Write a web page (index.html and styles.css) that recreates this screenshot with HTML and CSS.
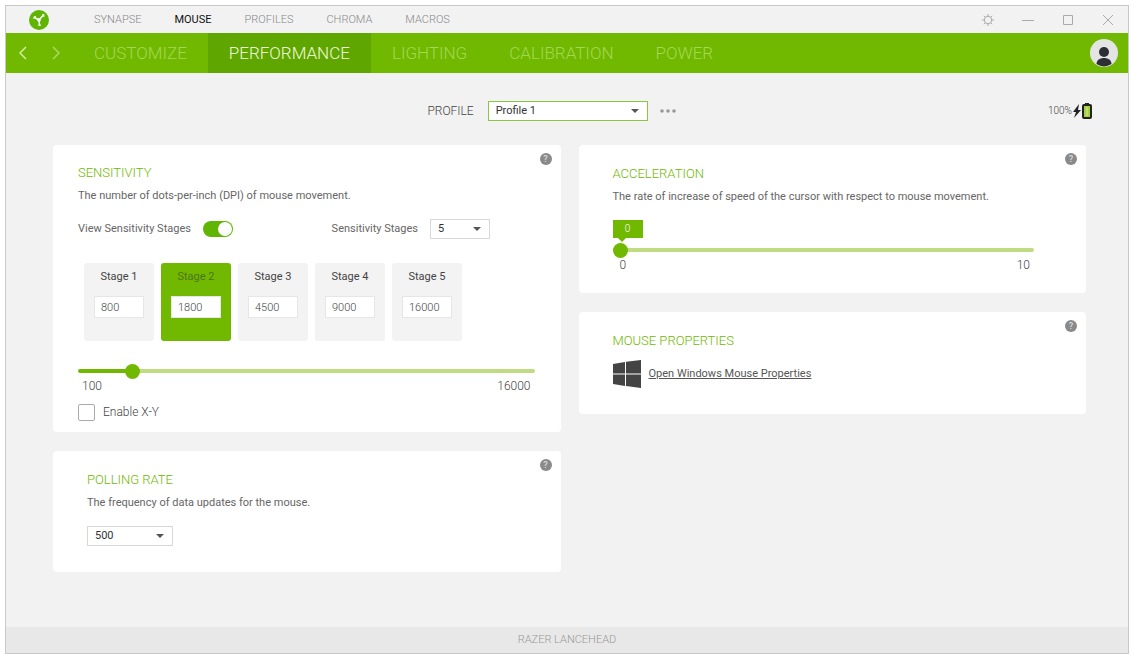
FILE: index.html
```html
<!DOCTYPE html>
<html lang="en">
<head>
    <meta charset="UTF-8">
    <meta name="viewport" content="width=device-width, initial-scale=1.0">
    <title>Razer Synapse</title>
    <link rel="stylesheet" href="styles.css">
</head>
<body>
    <div class="window">
        <header class="title-bar">
            <svg class="logo" viewBox="0 0 20 20" aria-hidden="true">
                <circle cx="10" cy="10" r="10" fill="#5fb404"/>
                <path d="M5.500 7.500L10 10l4-4.500M10 10l.5 5" fill="none" stroke="#fff" stroke-width="1.500" stroke-linecap="round" stroke-linejoin="round"/>
                <circle cx="10" cy="10" r="1.800" fill="#fff"/>
                <path d="M13 4.800l2-.3-.2 2.500M4.800 8.800l.2-2 2-.2M9 15.200h3" fill="none" stroke="#fff"/>
            </svg>
            <nav class="main-menu">
                <a href="#">SYNAPSE</a>
                <a href="#" class="active">MOUSE</a>
                <a href="#">PROFILES</a>
                <a href="#">CHROMA</a>
                <a href="#">MACROS</a>
            </nav>
            <div class="window-buttons">
                <button type="button" aria-label="Settings">
                    <svg viewBox="0 0 12 12"><circle cx="6" cy="6" r="3.700"/><path d="M6 0v2M6 10v2M0 6h2M10 6h2M1.800 1.800l1.500 1.500M8.700 8.700l1.500 1.500M1.800 10.200l1.500-1.500M8.700 3.300l1.500-1.500"/></svg>
                </button>
                <button type="button" aria-label="Minimize">
                    <svg viewBox="0 0 12 12"><path d="M0 6.500h12"/></svg>
                </button>
                <button type="button" aria-label="Maximize">
                    <svg viewBox="0 0 12 12"><path d="M1.500 1.500h9v9h-9z"/></svg>
                </button>
                <button type="button" aria-label="Close">
                    <svg viewBox="0 0 12 12"><path d="M1 1l10 10M11 1L1 11"/></svg>
                </button>
            </div>
        </header>

        <div class="tab-bar">
            <div class="history">
                <button type="button" aria-label="Back">
                    <svg viewBox="0 0 10 16"><path d="M8 2L2 8l6 6"/></svg>
                </button>
                <button type="button" class="disabled" aria-label="Forward">
                    <svg viewBox="0 0 10 16"><path d="M2 2l6 6-6 6"/></svg>
                </button>
            </div>
            <nav class="tabs">
                <a href="#">CUSTOMIZE</a>
                <a href="#" class="active">PERFORMANCE</a>
                <a href="#">LIGHTING</a>
                <a href="#">CALIBRATION</a>
                <a href="#">POWER</a>
            </nav>
            <button type="button" class="avatar" aria-label="Account">
                <svg viewBox="0 0 28 28">
                    <circle cx="14" cy="14" r="14" fill="#e4e4e4"/>
                    <circle cx="14" cy="13" r="5" fill="#2d2d35"/>
                    <path d="M6.500 25c0-4 3.500-6 7.500-6s7.500 2 7.500 6a14 14 0 0 1-15 0z" fill="#2d2d35"/>
                </svg>
            </button>
        </div>

        <main>
            <div class="profile-row">
                <div class="profile">
                    <label for="profile">PROFILE</label>
                    <span class="select profile-select">
                        <select id="profile"><option>Profile 1</option></select>
                    </span>
                    <button type="button" class="more" aria-label="More">
                        <svg viewBox="0 0 16 4"><circle cx="2" cy="2" r="1.800"/><circle cx="8" cy="2" r="1.800"/><circle cx="14" cy="2" r="1.800"/></svg>
                    </button>
                </div>
                <div class="battery">
                    <span>100%</span>
                    <svg class="bolt" viewBox="0 0 8 14"><path d="M6 0L0 8h3L1 14l7-8H5z" fill="#222"/></svg>
                    <svg class="cell" viewBox="0 0 10 16">
                        <path d="M3 0h4v2H3z" fill="#222"/>
                        <rect x="1" y="2" width="8" height="13" rx="1" fill="#a4cf3e" stroke="#222" stroke-width="2"/>
                        <path d="M5 4v9" stroke="#d5ec9b" stroke-width="1"/>
                    </svg>
                </div>
            </div>

            <div class="columns">
                <div class="column">
                    <section class="card sensitivity">
                        <button type="button" class="help" aria-label="Help">?</button>
                        <h2>SENSITIVITY</h2>
                        <p>The number of dots-per-inch (DPI) of mouse movement.</p>
                        <div class="options">
                            <div class="option">
                                <label for="view-stages">View Sensitivity Stages</label>
                                <input type="checkbox" id="view-stages" class="toggle" checked>
                            </div>
                            <div class="option">
                                <label for="stage-count">Sensitivity Stages</label>
                                <span class="select count-select">
                                    <select id="stage-count"><option>5</option></select>
                                </span>
                            </div>
                        </div>
                        <div class="stages">
                            <div class="stage">
                                <label for="stage1">Stage 1</label>
                                <input type="text" id="stage1" value="800">
                            </div>
                            <div class="stage active">
                                <label for="stage2">Stage 2</label>
                                <input type="text" id="stage2" value="1800">
                            </div>
                            <div class="stage">
                                <label for="stage3">Stage 3</label>
                                <input type="text" id="stage3" value="4500">
                            </div>
                            <div class="stage">
                                <label for="stage4">Stage 4</label>
                                <input type="text" id="stage4" value="9000">
                            </div>
                            <div class="stage">
                                <label for="stage5">Stage 5</label>
                                <input type="text" id="stage5" value="16000">
                            </div>
                        </div>
                        <input type="range" class="slider" min="100" max="16000" value="1800" aria-label="Sensitivity" style="--fill: 12%">
                        <div class="limits"><span>100</span><span>16000</span></div>
                        <div class="check">
                            <input type="checkbox" id="enable-xy">
                            <label for="enable-xy">Enable X-Y</label>
                        </div>
                    </section>

                    <section class="card polling">
                        <button type="button" class="help" aria-label="Help">?</button>
                        <h2>POLLING RATE</h2>
                        <p>The frequency of data updates for the mouse.</p>
                        <span class="select rate-select">
                            <select aria-label="Polling rate"><option>500</option></select>
                        </span>
                    </section>
                </div>

                <div class="column">
                    <section class="card acceleration">
                        <button type="button" class="help" aria-label="Help">?</button>
                        <h2>ACCELERATION</h2>
                        <p>The rate of increase of speed of the cursor with respect to mouse movement.</p>
                        <output class="bubble" for="acceleration">0</output>
                        <input type="range" id="acceleration" class="slider" min="0" max="10" value="0" aria-label="Acceleration" style="--fill: 0%">
                        <div class="limits"><span>0</span><span>10</span></div>
                    </section>

                    <section class="card properties">
                        <button type="button" class="help" aria-label="Help">?</button>
                        <h2>MOUSE PROPERTIES</h2>
                        <div class="windows-link">
                            <svg viewBox="0 0 28 28" aria-hidden="true">
                                <path d="M0 4l12-2v11.500H0zM13 1.800L28 0v13.500H13zM0 14.500h12V26L0 24zM13 14.500h15V28l-15-2z" fill="#444"/>
                            </svg>
                            <a href="#">Open Windows Mouse Properties</a>
                        </div>
                    </section>
                </div>
            </div>
        </main>

        <footer>RAZER LANCEHEAD</footer>
    </div>
</body>
</html>
```

FILE: styles.css
```css
* {
    box-sizing: border-box;
}
body {
    margin: 0;
    padding: 5px;
    background-color: #fff;
    font-family: Roboto, Arial, sans-serif;
    font-size: 12px;
    font-weight: 300;
    line-height: 18px;
    color: #444;
}
button, input, select {
    font: inherit;
    color: inherit;
    margin: 0;
}
button {
    display: flex;
    padding: 0;
    border: none;
    background: none;
    cursor: pointer;
}
.window {
    display: flex;
    flex-direction: column;
    min-height: calc(100vh - 10px);
    border: 1px solid #c8c8c8;
    background-color: #f2f2f2;
}

/* Title bar */
.title-bar {
    display: flex;
    align-items: center;
    height: 27px;
    padding: 0 14px 0 23px;
}
.logo {
    width: 20px;
    height: 20px;
}
.main-menu {
    display: flex;
    gap: 33px;
    margin-left: 45px;
    font-size: 11px;
}
.main-menu a {
    color: #888;
    text-decoration: none;
}
.main-menu .active {
    color: #111;
    font-weight: 400;
}
.window-buttons {
    display: flex;
    gap: 28px;
    margin-left: auto;
}
.window-buttons svg {
    width: 12px;
    height: 12px;
    fill: none;
    stroke: #aaa;
}

/* Green tab bar */
.tab-bar {
    display: flex;
    align-items: center;
    height: 40px;
    padding: 0 10px 0 12px;
    background-color: #70b900;
}
.history {
    display: flex;
    gap: 23px;
    width: 55px;
}
.history svg {
    width: 10px;
    height: 16px;
    fill: none;
    stroke: #d3ee9f;
    stroke-width: 1.5;
}
.history .disabled {
    opacity: 0.6;
}
.tabs {
    display: flex;
    align-self: stretch;
    font-size: 17px;
    line-height: 40px;
}
.tabs a {
    padding: 0 21px;
    color: #a5d854;
    text-decoration: none;
}
.tabs .active {
    background-color: #60a600;
    color: #f0fadd;
}
.avatar {
    margin-left: auto;
}
.avatar svg {
    width: 28px;
    height: 28px;
}

main {
    flex: 1;
    padding-top: 28px;
}

/* Drop-downs */
.select {
    display: inline-block;
    position: relative;
    height: 20px;
}
.select::after {
    content: "";
    position: absolute;
    right: 9px;
    top: 8px;
    border: 4px solid transparent;
    border-top-color: #555;
    border-bottom: none;
    pointer-events: none;
}
.select select {
    display: block;
    width: 100%;
    height: 100%;
    padding: 0 7px;
    appearance: none;
    border: 1px solid #d8d8d8;
    border-radius: 0;
    background-color: #fff;
    font-size: 11px;
    font-weight: 400;
    line-height: 16px;
    color: #333;
}
.profile-select {
    width: 160px;
    margin: 0 12px 0 14px;
}
.profile-select select {
    border-color: #8cc63f;
}
.count-select {
    width: 60px;
}
.rate-select {
    width: 86px;
}

.profile-row {
    display: grid;
    grid-template-columns: 1fr auto 1fr;
    align-items: center;
    padding: 0 36px 0 5px;
}
.profile {
    grid-column: 2;
    display: flex;
    align-items: center;
}
.more svg {
    width: 16px;
    height: 4px;
    fill: #999;
}
.battery {
    display: flex;
    align-items: center;
    justify-content: flex-end;
    gap: 1px;
    font-size: 10px;
}
.bolt {
    width: 8px;
    height: 14px;
}
.cell {
    width: 10px;
    height: 16px;
}

/* Cards */
.columns {
    display: grid;
    grid-template-columns: 1fr 1fr;
    gap: 18px;
    padding: 24px 42px 40px 47px;
}
.column {
    display: flex;
    flex-direction: column;
    gap: 19px;
}
.card {
    position: relative;
    padding: 20px 52px 26px 34px;
    border-radius: 4px;
    background-color: #fff;
}
.card h2 {
    margin: 0 0 5px;
    font-size: 13px;
    font-weight: 300;
    color: #70b900;
}
.card p {
    margin: 0 0 14px;
}
.card p, .option, .windows-link {
    font-size: 11px;
    font-weight: 400;
    color: #666;
}
.polling .select {
    display: block;
}
.help {
    position: absolute;
    top: 8px;
    right: 9px;
    justify-content: center;
    width: 12px;
    height: 12px;
    border-radius: 50%;
    background-color: #8a8a8a;
    color: #ddd;
    font-size: 9px;
    font-weight: 500;
    line-height: 12px;
}

/* Sensitivity */
.sensitivity {
    padding: 19px 26px 11px 25px;
}
.options {
    display: grid;
    grid-template-columns: 5fr 4fr;
}
.option {
    display: flex;
    align-items: center;
    gap: 12px;
}
.toggle {
    appearance: none;
    width: 30px;
    height: 16px;
    padding: 1px;
    border-radius: 8px;
    background-color: #bbb;
}
.toggle::before {
    content: "";
    display: block;
    width: 14px;
    height: 14px;
    border-radius: 50%;
    background-color: #fff;
}
.toggle:checked {
    background-color: #5fb404;
}
.toggle:checked::before {
    margin-left: auto;
}
.stages {
    display: flex;
    gap: 7px;
    margin: 24px 6px 22px;
}
.stage {
    display: flex;
    flex-direction: column;
    align-items: center;
    gap: 10px;
    width: 70px;
    height: 78px;
    padding-top: 5px;
    border-radius: 3px;
    background-color: #f3f3f3;
    font-size: 11px;
    font-weight: 400;
}
.stage input {
    width: 50px;
    height: 22px;
    padding: 0 6px;
    border: 1px solid #e6e6e6;
    background-color: #fff;
    font-weight: 300;
}
.stage.active {
    background-color: #70b900;
    color: #4f7515;
}
.stage.active input {
    color: #444;
}

/* Sliders */
.slider {
    display: block;
    appearance: none;
    width: 100%;
    height: 16px;
    background: none;
}
.slider::-webkit-slider-runnable-track {
    height: 4px;
    border-radius: 2px;
    background: linear-gradient(to right, #70b900 var(--fill), #bfdc83 var(--fill));
}
.slider::-webkit-slider-thumb {
    appearance: none;
    width: 15px;
    height: 15px;
    margin-top: -5px;
    border-radius: 50%;
    background-color: #70b900;
}
.limits {
    display: flex;
    justify-content: space-between;
    padding: 0 4px;
    line-height: 14px;
}
.check {
    display: flex;
    align-items: center;
    gap: 8px;
    margin-top: 10px;
}
.check input {
    appearance: none;
    width: 17px;
    height: 17px;
    border: 1px solid #aaa;
    border-radius: 2px;
    background-color: #fff;
}

/* Acceleration */
.acceleration {
    padding-bottom: 21px;
}
.acceleration .limits {
    padding: 0 4px 0 7px;
}
.bubble {
    display: block;
    position: relative;
    width: 30px;
    margin-bottom: 4px;
    background-color: #70b900;
    color: #fff;
    font-size: 10px;
    text-align: center;
}
.bubble::after {
    content: "";
    position: absolute;
    left: 5px;
    top: 100%;
    border: 4px solid transparent;
    border-top-color: #70b900;
    border-bottom: none;
}

/* Mouse properties */
.windows-link {
    display: flex;
    align-items: center;
    gap: 8px;
    margin-top: 10px;
}
.windows-link svg {
    width: 28px;
    height: 28px;
}
.windows-link a {
    color: #555;
}

footer {
    height: 26px;
    background-color: #e8e8e8;
    font-size: 11px;
    line-height: 26px;
    text-align: center;
    color: #999;
}
```
